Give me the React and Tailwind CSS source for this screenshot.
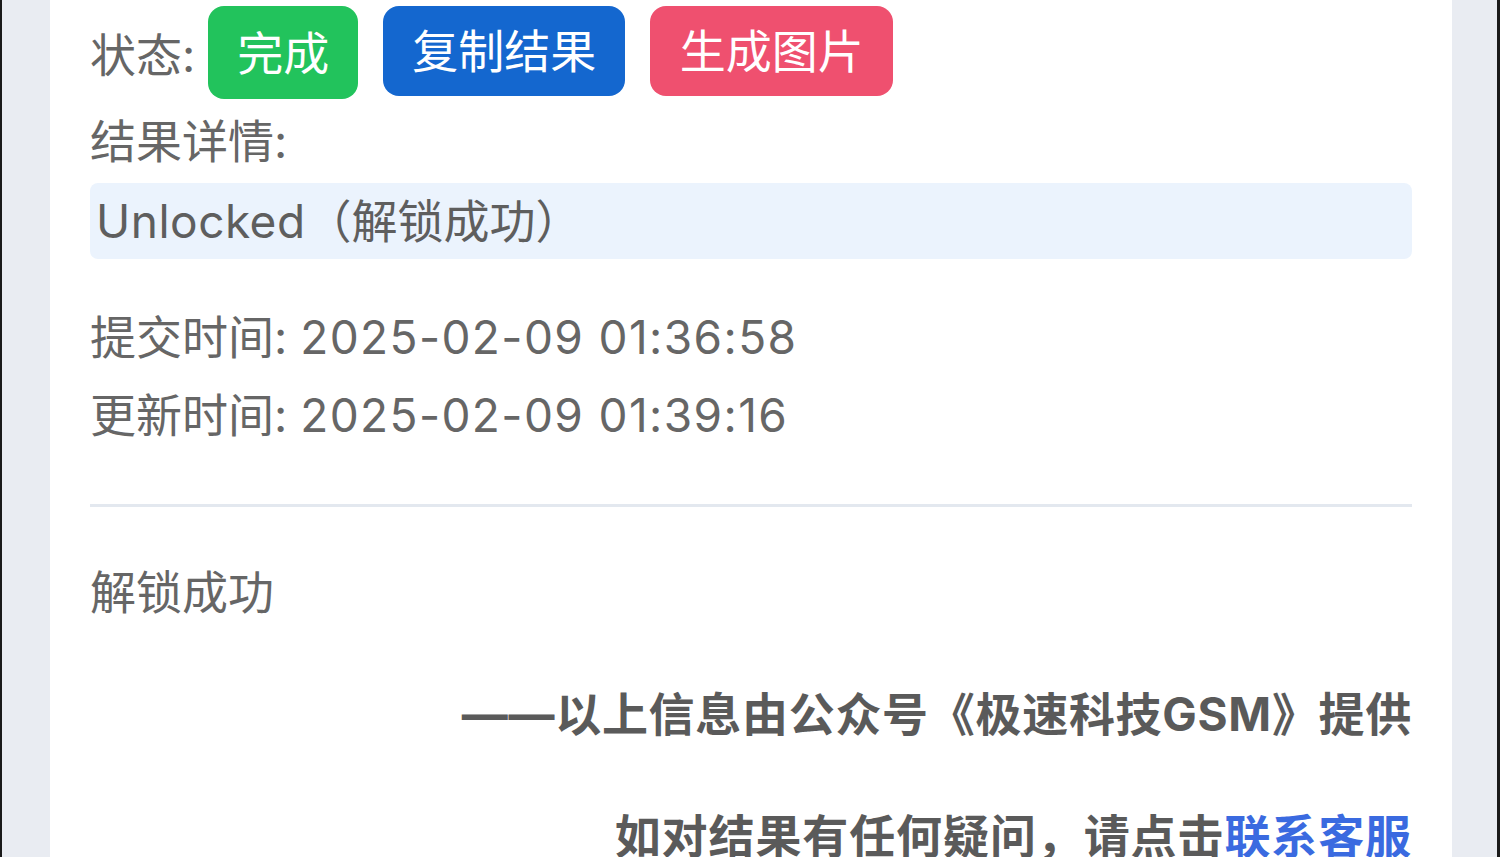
const FONT = "font-['Inter','Noto_Sans_CJK_SC',sans-serif]";

export default function App() {
  return (
    <div className={`flex h-[857px] w-[1500px] overflow-hidden bg-[#1a1a1a] ${FONT}`}>
      <div className="flex flex-1 bg-[#e9ecf2] ml-[2px] mr-[3px] pl-[48px] pr-[45px]">
        <div className="flex-1 bg-white px-[40px] text-[46px] leading-none text-[#666666]">
          <div className="flex items-start pt-[6px]">
            <span className="mt-[26px] mr-[13px]">状态:</span>
            <span className="flex h-[93px] w-[150px] items-center justify-center rounded-[16px] bg-[#22c35c] text-white">完成</span>
            <span className="ml-[25px] flex h-[90px] w-[242px] items-center justify-center rounded-[16px] bg-[#1467cf] text-white">复制结果</span>
            <span className="ml-[25px] flex h-[90px] w-[243px] items-center justify-center rounded-[16px] bg-[#ef506f] text-white">生成图片</span>
          </div>
          <div className="mt-[19px]">结果详情:</div>
          <div className="mt-[19px] flex h-[76px] items-center rounded-[8px] bg-[#ebf3fd] px-[6px] text-[46px] text-[#5e5e5e]">
            <span className="tracking-[0.5px]">Unlocked</span>（解锁成功）
          </div>
          <div className="mt-[55px] flex flex-col gap-[32px]">
            <div>提交时间: <span className="tracking-[1.4px]">2025-02-09 01:36:58</span></div>
            <div>更新时间: <span className="tracking-[1.4px]">2025-02-09 01:39:16</span></div>
          </div>
          <div className="mt-[66px] h-[3px] bg-[#e3e8ef]" />
          <div className="mt-[62px]">解锁成功</div>
          <div className="mt-[76px] text-right font-bold tracking-[0.7px] text-[#5a5a5a]">——以上信息由公众号《极速科技GSM》提供</div>
          <div className="mt-[76px] text-right font-bold tracking-[0.9px] text-[#5a5a5a]">
            如对结果有任何疑问，请点击<span className="text-[#3a6ae0]">联系客服</span>
          </div>
        </div>
      </div>
    </div>
  );
}
